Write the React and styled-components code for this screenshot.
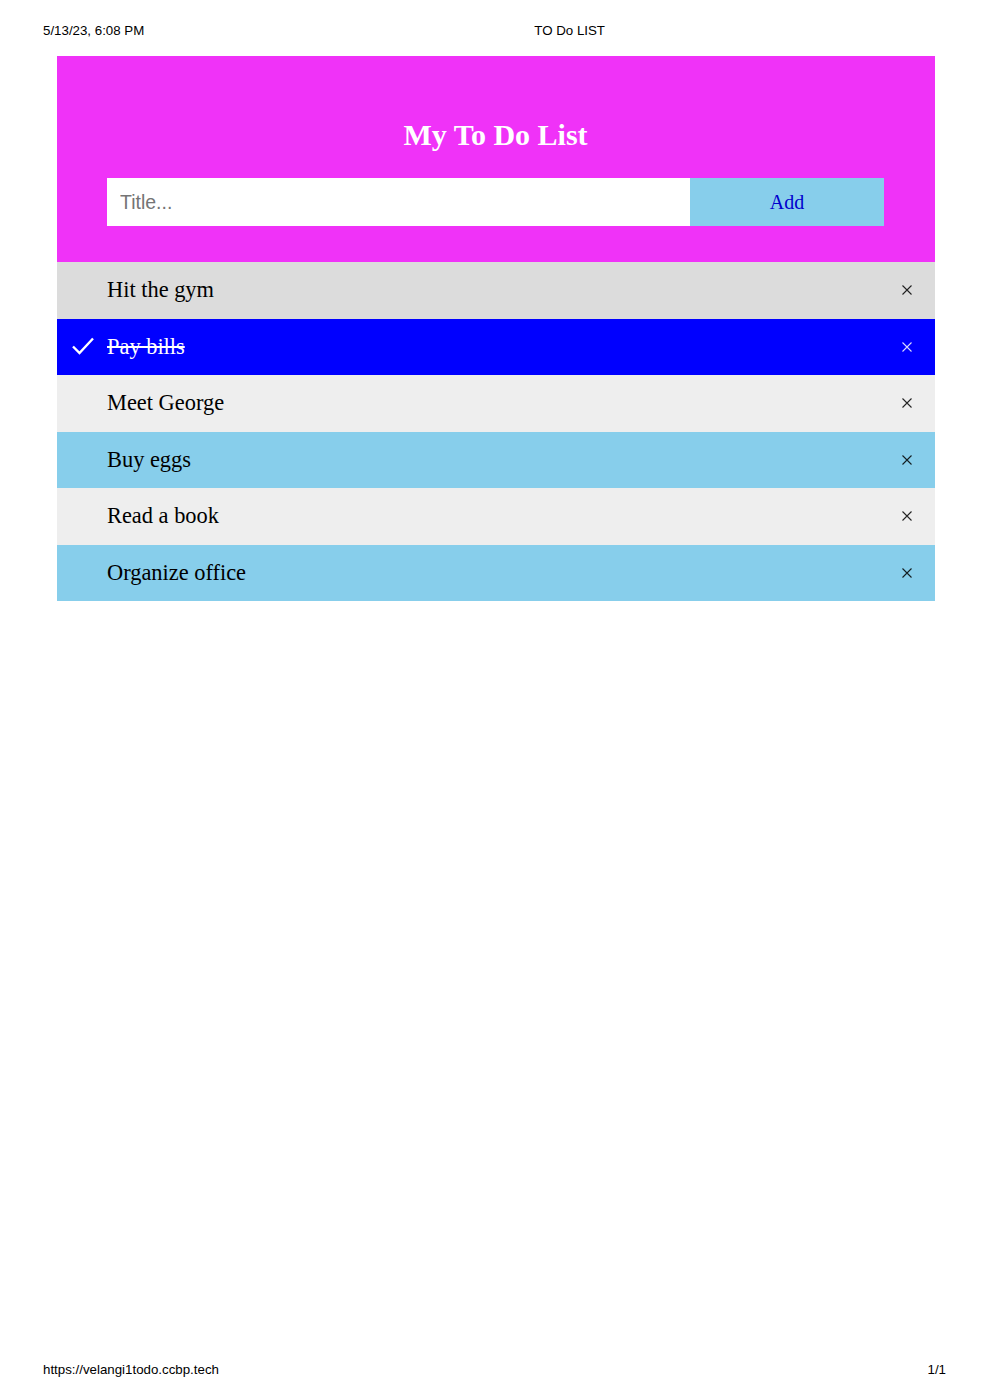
import React, { useState } from "react";
import styled, { createGlobalStyle } from "styled-components";

const GlobalStyle = createGlobalStyle`
  body {
    margin: 0;
    background: #ffffff;
    font-family: "Liberation Serif", "Times New Roman", serif;
  }
`;

const initialTodos = [
  { id: 1, title: "Hit the gym", done: false, tone: "grey" },
  { id: 2, title: "Pay bills", done: true, tone: "done" },
  { id: 3, title: "Meet George", done: false, tone: "light" },
  { id: 4, title: "Buy eggs", done: false, tone: "sky" },
  { id: 5, title: "Read a book", done: false, tone: "light" },
  { id: 6, title: "Organize office", done: false, tone: "sky" },
];

const tones = {
  grey: "#dcdcdc",
  light: "#eeeeee",
  sky: "#87ceeb",
  done: "#0000ff",
};

const App = () => {
  const [todos, setTodos] = useState(initialTodos);
  const [title, setTitle] = useState("");

  const toggleTodo = (id) => {
    setTodos(todos.map((t) => (t.id === id ? { ...t, done: !t.done } : t)));
  };
  const removeTodo = (id) => {
    setTodos(todos.filter((t) => t.id !== id));
  };
  const addTodo = () => {
    if (!title.trim()) return;
    setTodos([
      ...todos,
      { id: Date.now(), title: title.trim(), done: false, tone: "light" },
    ]);
    setTitle("");
  };

  return (
    <Page>
      <GlobalStyle />
      <PrintHeader>
        <span>5/13/23, 6:08 PM</span>
        <PrintTitle>TO Do LIST</PrintTitle>
      </PrintHeader>
      <Main>
        <Header>
          <h2>My To Do List</h2>
          <Form>
            <input
              type="text"
              placeholder="Title..."
              value={title}
              onChange={(e) => setTitle(e.target.value)}
            />
            <button onClick={addTodo}>Add</button>
          </Form>
        </Header>
        <List>
          {todos.map((todo) => (
            <Item
              key={todo.id}
              $tone={todo.done ? "done" : todo.tone}
              $done={todo.done}
              onClick={() => toggleTodo(todo.id)}
            >
              {todo.done && (
                <Check viewBox="0 0 24 24">
                  <path d="M2 12.5 L8.5 19 L22 4.5" />
                </Check>
              )}
              <span>{todo.title}</span>
              <Close
                viewBox="0 0 10 10"
                onClick={(e) => {
                  e.stopPropagation();
                  removeTodo(todo.id);
                }}
              >
                <path d="M0.5 0.5 L9.5 9.5 M9.5 0.5 L0.5 9.5" />
              </Close>
            </Item>
          ))}
        </List>
      </Main>
      <PrintFooter>
        <span>https://velangi1todo.ccbp.tech</span>
        <span>1/1</span>
      </PrintFooter>
    </Page>
  );
};

const Page = styled.div`
  height: 1400px;
  display: flex;
  flex-direction: column;
  box-sizing: border-box;
`;

const PrintHeader = styled.div`
  display: flex;
  align-items: center;
  height: 16px;
  margin-top: 22px;
  padding-left: 43px;
  font-family: "Liberation Sans", Arial, sans-serif;
  font-size: 13.3px;
  color: #000;
`;

const PrintTitle = styled.span`
  margin-left: 390px;
`;

const Main = styled.div`
  margin: 18px 49px 0 57px;
`;

const Header = styled.div`
  background: #f032f8;
  padding: 56px 51px 36px 50px;
  text-align: center;
  h2 {
    margin: 0 0 20px;
    color: #ffffff;
    font-family: "Liberation Serif", "Times New Roman", serif;
    font-size: 30px;
    font-weight: bold;
    line-height: 46px;
  }
`;

const Form = styled.div`
  display: flex;
  height: 48px;
  input {
    flex: 1;
    min-width: 0;
    border: none;
    outline: none;
    margin: 0;
    padding: 0 13px;
    font-family: "Liberation Sans", Arial, sans-serif;
    font-size: 19.5px;
    color: #333;
    background: #ffffff;
    &::placeholder {
      color: #757575;
    }
  }
  button {
    width: 194px;
    border: none;
    margin: 0;
    background: #87ceeb;
    color: #0000cd;
    font-family: "Liberation Serif", "Times New Roman", serif;
    font-size: 20px;
    cursor: pointer;
  }
`;

const List = styled.ul`
  list-style: none;
  margin: 0;
  padding: 0;
`;

const Item = styled.li`
  position: relative;
  display: flex;
  align-items: center;
  height: 56.5px;
  padding: 0 0 0 50px;
  background: ${(p) => tones[p.$tone]};
  color: ${(p) => (p.$done ? "#ffffff" : "#000000")};
  font-family: "Liberation Serif", "Times New Roman", serif;
  font-size: 22.4px;
  cursor: pointer;
  span {
    text-decoration: ${(p) => (p.$done ? "line-through" : "none")};
  }
`;

const Check = styled.svg`
  position: absolute;
  left: 14px;
  top: 50%;
  width: 24px;
  height: 24px;
  margin-top: -13px;
  fill: none;
  stroke: #ffffff;
  stroke-width: 2.4;
`;

const Close = styled.svg`
  position: absolute;
  right: 23px;
  top: 50%;
  width: 10px;
  height: 10px;
  margin-top: -5px;
  fill: none;
  stroke: currentColor;
  stroke-width: 1.1;
  opacity: 0.85;
`;

const PrintFooter = styled.div`
  margin-top: auto;
  margin-bottom: 23px;
  display: flex;
  justify-content: space-between;
  padding: 0 38px 0 43px;
  font-family: "Liberation Sans", Arial, sans-serif;
  font-size: 13.3px;
  color: #000;
`;

export default App;
